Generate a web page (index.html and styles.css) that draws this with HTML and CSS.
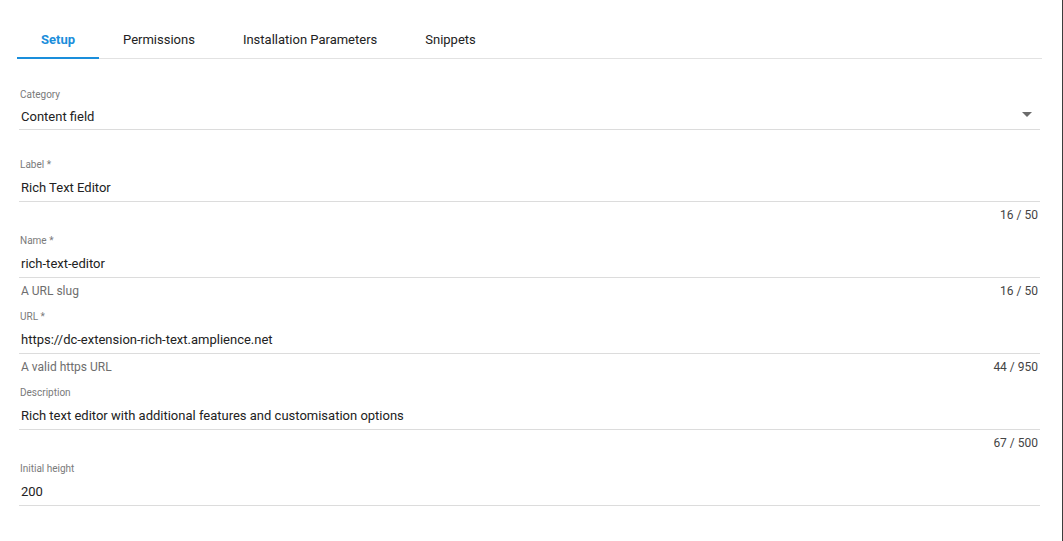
FILE: index.html
```html
<!DOCTYPE html>
<html lang="en">
<head>
<meta charset="utf-8">
<title>Extension Setup</title>
<link rel="stylesheet" href="styles.css">
</head>
<body>
<div class="page">
  <nav class="tabs">
    <div class="tab active">Setup</div>
    <div class="tab">Permissions</div>
    <div class="tab">Installation Parameters</div>
    <div class="tab">Snippets</div>
  </nav>
  <form class="form">
    <div class="field field-select">
      <div class="label">Category</div>
      <div class="input">
        <span class="value">Content field</span>
        <svg class="arrow" width="10" height="5" viewBox="0 0 10 5"><path d="M0 0h10L5 5z" fill="#6b6b6b"/></svg>
      </div>
    </div>
    <div class="field">
      <div class="label">Label *</div>
      <div class="input"><span class="value">Rich Text Editor</span></div>
      <div class="helper"><span></span><span class="count">16 / 50</span></div>
    </div>
    <div class="field">
      <div class="label">Name *</div>
      <div class="input"><span class="value">rich-text-editor</span></div>
      <div class="helper"><span class="hint">A URL slug</span><span class="count">16 / 50</span></div>
    </div>
    <div class="field">
      <div class="label">URL *</div>
      <div class="input"><span class="value">https://dc-extension-rich-text.amplience.net</span></div>
      <div class="helper"><span class="hint">A valid https URL</span><span class="count">44 / 950</span></div>
    </div>
    <div class="field">
      <div class="label">Description</div>
      <div class="input"><span class="value">Rich text editor with additional features and customisation options</span></div>
      <div class="helper"><span></span><span class="count">67 / 500</span></div>
    </div>
    <div class="field">
      <div class="label">Initial height</div>
      <div class="input"><span class="value">200</span></div>
    </div>
  </form>
</div>
</body>
</html>
```

FILE: styles.css
```css
html, body {
  margin: 0;
  padding: 0;
  background: #fff;
}

body {
  font-family: Roboto, "Liberation Sans", Arial, sans-serif;
  color: #222;
}

.page {
  box-sizing: border-box;
  width: 1063px;
  height: 541px;
  overflow: hidden;
  padding: 0 20px 0 17px;
  border-right: 1px solid #3d3d3d;
}

.tabs {
  display: flex;
  margin-top: 22px;
  border-bottom: 1px solid #e2e2e2;
}

.tab {
  padding: 0 24px;
  height: 35px;
  line-height: 36px;
  font-size: 13px;
  color: #222;
  border-bottom: 2px solid transparent;
  margin-bottom: -1px;
}

.tab.active {
  color: #1a8edb;
  font-weight: 700;
  border-bottom-color: #1a8edb;
}

.form {
  margin: 29px 2px 0 2px;
}

.field {
  margin-bottom: 11px;
}

.field-select {
  margin-bottom: 28px;
}

.label {
  font-size: 10px;
  line-height: 12px;
  height: 12px;
  padding-top: 1px;
  color: #7a7a7a;
  padding-left: 1px;
  margin-bottom: 2px;
}

.field-select .label {
  margin-bottom: 0;
}

.input {
  box-sizing: border-box;
  display: flex;
  align-items: center;
  justify-content: space-between;
  height: 29px;
  padding-top: 2px;
  border-bottom: 1px solid #dcdcdc;
  padding-left: 2px;
}

.field-select .input {
  padding-top: 3px;
}

.value {
  font-size: 13px;
  line-height: 24px;
  color: #222;
}

.arrow {
  margin-right: 8px;
  margin-top: -4px;
}

.helper {
  display: flex;
  justify-content: space-between;
  margin-top: 5px;
  height: 16px;
  line-height: 16px;
  font-size: 12px;
  padding: 0 2px;
}

.hint {
  color: #6e6e6e;
}

.count {
  color: #444;
}
```
